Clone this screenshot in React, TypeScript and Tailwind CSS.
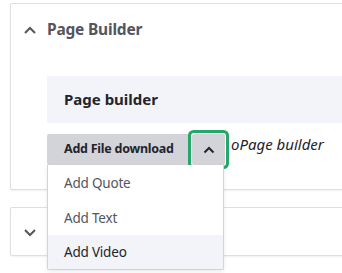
import React from 'react'

const font = { fontFamily: '"Noto Sans", "Open Sans", sans-serif' }

function Chevron({ up }: { up?: boolean }) {
  return (
    <svg width="14" height="14" viewBox="0 0 14 14" className="shrink-0">
      <path
        d={up ? 'M2 10 L7 5 L12 10' : 'M2 5 L7 10 L12 5'}
        fill="none"
        stroke="#545560"
        strokeWidth="2"
      />
    </svg>
  )
}

export default function App() {
  return (
    <div className="w-[342px] h-[273px] overflow-hidden bg-white" style={font}>
      <div className="pl-[10px] pt-[3px] w-[360px] flex flex-col gap-[17px]">
        {/* Page Builder card */}
        <div className="border border-[#dedfe4] rounded-[2px] shadow-[0_1px_2px_rgba(0,0,0,0.06)] bg-white pb-[24px]">
          <div className="h-[52px] flex items-center gap-[10px] pl-[12px]">
            <Chevron up />
            <span className="text-[15.5px] tracking-[-0.2px] font-bold text-[#545560]">Page Builder</span>
          </div>
          <div className="pl-[36px] pt-[20px]">
            <div className="h-[47px] bg-[#f3f4f9] flex items-center pl-[17px]">
              <span className="text-[15px] font-bold text-[#232429]">Page builder</span>
            </div>
            <div className="mt-[11px] flex items-center">
              <div className="relative flex">
                <div className="h-[31px] w-[141px] bg-[#d3d4d9] rounded-l-[2px] flex items-center pl-[17px]">
                  <span className="text-[12.5px] tracking-[-0.25px] font-bold text-[#232429]">Add File download</span>
                </div>
                <div className="h-[31px] w-[33px] ml-[4px] bg-[#d3d4d9] rounded-[2px] flex items-center justify-center shadow-[0_0_0_1px_#ffffff,0_0_0_4px_#26a769]">
                  <svg width="14" height="12" viewBox="0 0 14 12">
                    <path d="M2.5 8.5 L7 4 L11.5 8.5" fill="none" stroke="#232429" strokeWidth="2" />
                  </svg>
                </div>
                <div className="absolute left-0 top-[31px] w-[177px] bg-white border border-[#d3d4d9] border-t-0 rounded-b-[2px] shadow-[0_2px_4px_rgba(0,0,0,0.08)] z-10 flex flex-col">
                  <div className="h-[36px] flex items-center pl-[16px] text-[13.5px] tracking-[-0.2px] text-[#545560]">Add Quote</div>
                  <div className="h-[34px] flex items-center pl-[16px] text-[13.5px] tracking-[-0.2px] text-[#545560]">Add Text</div>
                  <div className="h-[34px] flex items-center pl-[16px] text-[13.5px] tracking-[-0.2px] text-[#232429] bg-[#f3f4f9]">Add Video</div>
                </div>
              </div>
              <span className="ml-[6px] -mt-[10px] text-[15px] italic text-[#232429]">oPage builder</span>
            </div>
          </div>
        </div>

        {/* Collapsed card */}
        <div className="h-[49px] border border-[#dedfe4] rounded-[2px] shadow-[0_1px_2px_rgba(0,0,0,0.06)] bg-white flex items-center pl-[12px]">
          <Chevron />
        </div>
      </div>
    </div>
  )
}
